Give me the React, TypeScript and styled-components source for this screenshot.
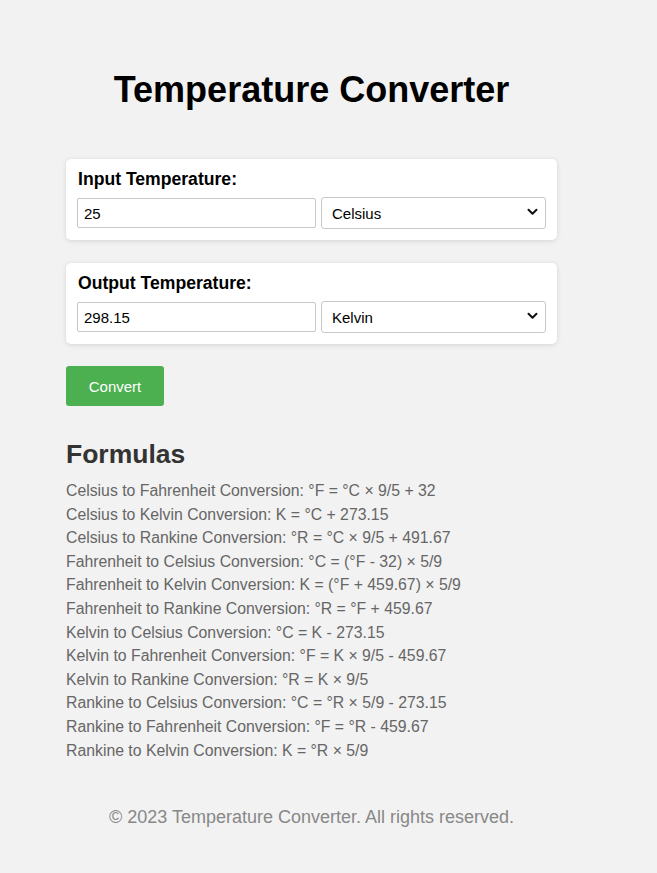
import styled, { createGlobalStyle } from "styled-components";

const GlobalStyle = createGlobalStyle`
  body {
    margin: 0;
    background-color: #f2f2f2;
    font-family: "Liberation Sans", Arial, sans-serif;
  }
`;

const Page = styled.div`
  width: 491px;
  margin-left: 66px;
  padding-top: 64px;
  padding-bottom: 30px;
`;

const Title = styled.h1`
  margin: 0 0 43px;
  text-align: center;
  font-size: 36px;
  line-height: 52px;
  color: #000;
`;

const Card = styled.div`
  background-color: #fff;
  border-radius: 5px;
  box-shadow: 0 1px 5px rgba(0, 0, 0, 0.12);
  padding: 10px 11px 11px;
  margin-bottom: 23px;
`;

const Label = styled.label`
  display: block;
  font-size: 17.6px;
  font-weight: bold;
  line-height: 21px;
  margin: 0 1px 7px;
  color: #000;
`;

const Row = styled.div`
  display: grid;
  grid-template-columns: 239px 225px;
  column-gap: 5px;
  align-items: center;
`;

const TextInput = styled.input`
  box-sizing: border-box;
  height: 30px;
  padding: 0 6px;
  border: 1px solid #c8c8c8;
  border-radius: 2px;
  font-family: "Liberation Sans", Arial, sans-serif;
  font-size: 15px;
  color: #000;
  background: #fff;
`;

const SelectBox = styled.div`
  position: relative;
`;

const Select = styled.select`
  box-sizing: border-box;
  width: 100%;
  height: 32px;
  padding: 0 30px 0 10px;
  border: 1px solid #c8c8c8;
  border-radius: 3px;
  appearance: none;
  background: #fff;
  font-family: "Liberation Sans", Arial, sans-serif;
  font-size: 15px;
  color: #000;
`;

const Chevron = styled.svg`
  position: absolute;
  right: 8px;
  top: 11px;
  pointer-events: none;
`;

const Button = styled.button`
  width: 98px;
  height: 40px;
  margin-top: -1px;
  border: none;
  border-radius: 3px;
  background-color: #4caf50;
  color: #fff;
  font-family: "Liberation Sans", Arial, sans-serif;
  font-size: 15px;
  cursor: pointer;
`;

const Heading = styled.h2`
  margin: 31px 0 8px;
  font-size: 26.5px;
  line-height: 34px;
  color: #333;
`;

const FormulaList = styled.div`
  color: #666;
  font-size: 15.8px;
  line-height: 23.6px;
`;

const Formula = styled.p`
  margin: 0;
`;

const Footer = styled.footer`
  margin-top: 45px;
  text-align: center;
  color: #888;
  font-size: 18px;
`;

const formulas = [
  "Celsius to Fahrenheit Conversion: °F = °C × 9/5 + 32",
  "Celsius to Kelvin Conversion: K = °C + 273.15",
  "Celsius to Rankine Conversion: °R = °C × 9/5 + 491.67",
  "Fahrenheit to Celsius Conversion: °C = (°F - 32) × 5/9",
  "Fahrenheit to Kelvin Conversion: K = (°F + 459.67) × 5/9",
  "Fahrenheit to Rankine Conversion: °R = °F + 459.67",
  "Kelvin to Celsius Conversion: °C = K - 273.15",
  "Kelvin to Fahrenheit Conversion: °F = K × 9/5 - 459.67",
  "Kelvin to Rankine Conversion: °R = K × 9/5",
  "Rankine to Celsius Conversion: °C = °R × 5/9 - 273.15",
  "Rankine to Fahrenheit Conversion: °F = °R - 459.67",
  "Rankine to Kelvin Conversion: K = °R × 5/9",
];

const units = ["Celsius", "Fahrenheit", "Kelvin", "Rankine"];

function UnitSelect({ value }: { value: string }) {
  return (
    <SelectBox>
      <Select defaultValue={value}>
        {units.map((u) => (
          <option key={u} value={u}>
            {u}
          </option>
        ))}
      </Select>
      <Chevron width="11" height="8" viewBox="0 0 11 8">
        <path
          d="M1.5 1.8 L5.5 5.8 L9.5 1.8"
          fill="none"
          stroke="#111"
          strokeWidth="2"
          strokeLinecap="round"
          strokeLinejoin="round"
        />
      </Chevron>
    </SelectBox>
  );
}

export default function App() {
  return (
    <>
      <GlobalStyle />
      <Page>
        <Title>Temperature Converter</Title>
        <Card>
          <Label>Input Temperature:</Label>
          <Row>
            <TextInput defaultValue="25" />
            <UnitSelect value="Celsius" />
          </Row>
        </Card>
        <Card>
          <Label>Output Temperature:</Label>
          <Row>
            <TextInput defaultValue="298.15" readOnly />
            <UnitSelect value="Kelvin" />
          </Row>
        </Card>
        <Button>Convert</Button>
        <Heading>Formulas</Heading>
        <FormulaList>
          {formulas.map((f) => (
            <Formula key={f}>{f}</Formula>
          ))}
        </FormulaList>
        <Footer>© 2023 Temperature Converter. All rights reserved.</Footer>
      </Page>
    </>
  );
}
